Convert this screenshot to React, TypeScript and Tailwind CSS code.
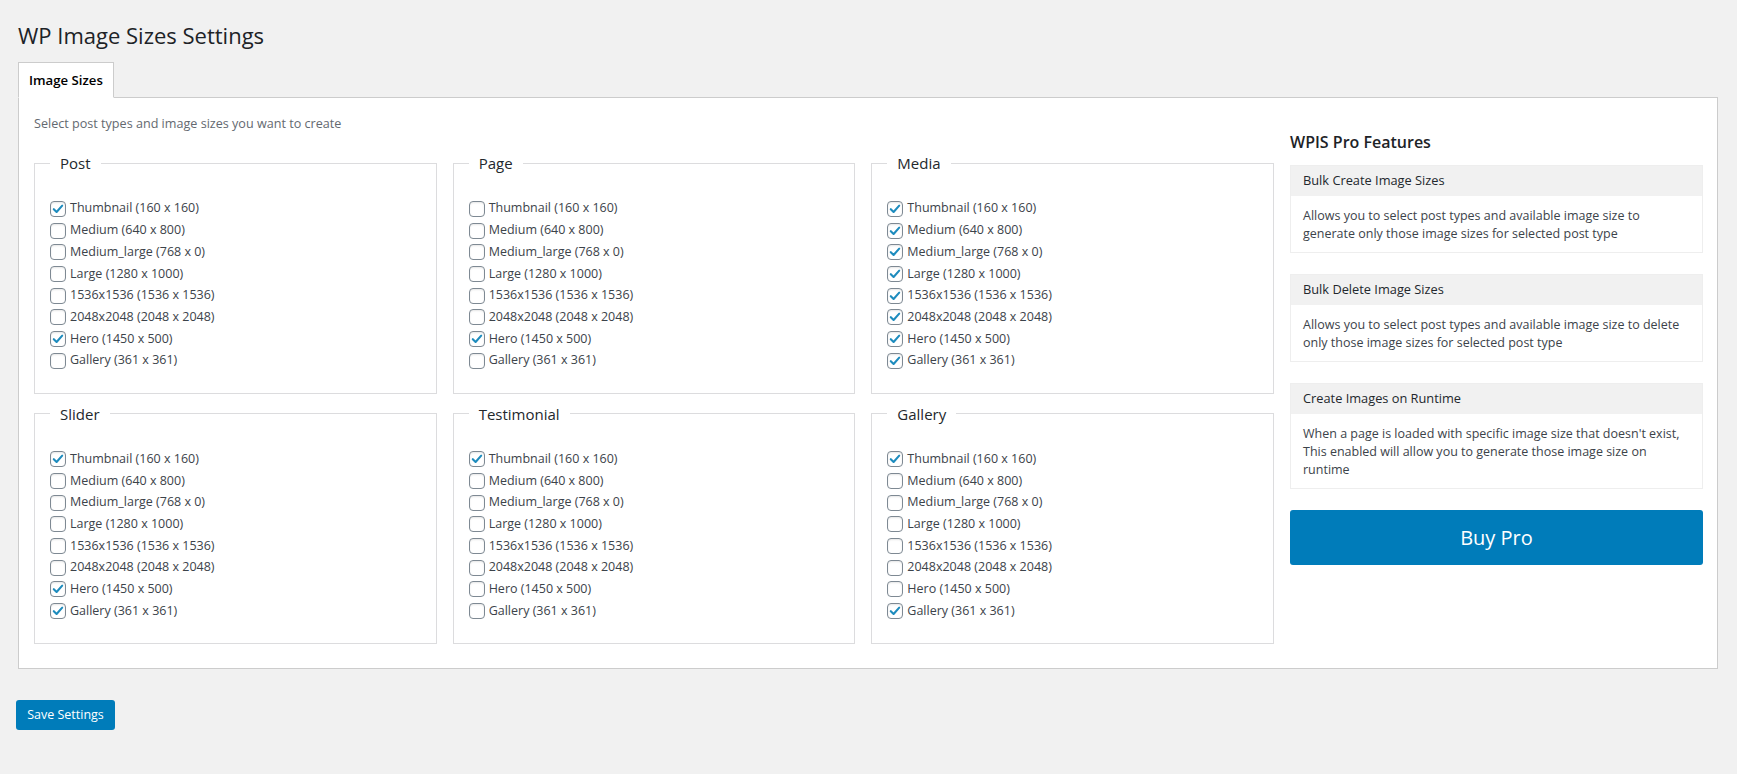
import React from 'react';

const SIZES = [
  'Thumbnail (160 x 160)',
  'Medium (640 x 800)',
  'Medium_large (768 x 0)',
  'Large (1280 x 1000)',
  '1536x1536 (1536 x 1536)',
  '2048x2048 (2048 x 2048)',
  'Hero (1450 x 500)',
  'Gallery (361 x 361)',
];

// which sizes are ticked, by index into SIZES
const POST_TYPES: { name: string; checked: number[] }[] = [
  { name: 'Post', checked: [0, 6] },
  { name: 'Page', checked: [6] },
  { name: 'Media', checked: [0, 1, 2, 3, 4, 5, 6, 7] },
  { name: 'Slider', checked: [0, 6, 7] },
  { name: 'Testimonial', checked: [0] },
  { name: 'Gallery', checked: [0, 7] },
];

const FEATURES = [
  {
    title: 'Bulk Create Image Sizes',
    text: 'Allows you to select post types and available image size to generate only those image sizes for selected post type',
  },
  {
    title: 'Bulk Delete Image Sizes',
    text: 'Allows you to select post types and available image size to delete only those image sizes for selected post type',
  },
  {
    title: 'Create Images on Runtime',
    text: "When a page is loaded with specific image size that doesn't exist, This enabled will allow you to generate those image size on runtime",
  },
];

function Checkbox({ checked }: { checked: boolean }) {
  return (
    <span className="w-4 h-4 shrink-0 rounded-[4px] border border-[#7e8993] bg-white shadow-[inset_0_1px_2px_rgba(0,0,0,0.1)] flex items-center justify-center">
      {checked && (
        <svg viewBox="0 0 16 16" className="w-[14px] h-[14px]">
          <path d="M3.2 8.2 L6.4 11.4 L12.8 4.2" fill="none" stroke="#1e8cbe" strokeWidth="2.4" strokeLinecap="round" strokeLinejoin="round" />
        </svg>
      )}
    </span>
  );
}

function SizeGroup({ name, checked }: { name: string; checked: number[] }) {
  return (
    <fieldset className="border border-[#dcdcde] pl-[15px] pr-4 pt-[25px] pb-[21px] min-w-0">
      <legend className="px-[10px] text-[15px] leading-[20px] font-normal text-[#23282d]">{name}</legend>
      {SIZES.map((s, i) => (
        <label key={s} className="flex items-center gap-[4px] h-[21.7px] text-[12.5px] text-[#3c434a] cursor-pointer">
          <Checkbox checked={checked.includes(i)} />
          <span>{s}</span>
        </label>
      ))}
    </fieldset>
  );
}

export default function App() {
  return (
    <div className="min-h-screen bg-[#f1f1f1] pl-4 pr-[19px] pt-[20px] pb-10 font-['Open_Sans',sans-serif] text-[#3c434a]">
      <h1 className="ml-[2px] text-[22px] leading-[30px] font-normal text-[#1d2327]">WP Image Sizes Settings</h1>

      {/* Tabs */}
      <div className="ml-[2px] mt-[12px] flex">
        <div className="px-[10px] py-[5px] text-[13.2px] leading-[24px] font-semibold text-[#000] bg-white border border-[#ccc] border-b-white -mb-px relative z-10">
          Image Sizes
        </div>
      </div>

      {/* Panel */}
      <div className="ml-[2px] bg-white border border-[#ccc] pl-[15px] pr-[14px] pt-[17px] pb-[24px] flex gap-4">
        <div className="flex-1 min-w-0">
          <p className="text-[12.6px] leading-[18px] text-[#646970] mb-[20px]">Select post types and image sizes you want to create</p>
          <div className="grid grid-cols-3 gap-x-4 gap-y-[10px]">
            {POST_TYPES.map((p) => (
              <SizeGroup key={p.name} name={p.name} checked={p.checked} />
            ))}
          </div>
        </div>

        <aside className="w-[413px] shrink-0 pt-[16px]">
          <h3 className="text-[16px] leading-[22px] font-semibold text-[#1d2327] mb-[12px]">WPIS Pro Features</h3>
          <div className="flex flex-col gap-[21px]">
            {FEATURES.map((f) => (
              <div key={f.title} className="border border-[#eeeeee]">
                <div className="bg-[#f1f1f1] px-3 h-[30px] flex items-center text-[12.8px] text-[#23282d]">{f.title}</div>
                <p className="px-3 pt-[11px] pb-[9px] text-[12.5px] leading-[18px] text-[#3c434a]">{f.text}</p>
              </div>
            ))}
            <button className="h-[55px] rounded-[3px] bg-[#007cba] text-white text-[20px]">Buy Pro</button>
          </div>
        </aside>
      </div>

      <button className="mt-[31px] h-[30px] w-[99px] rounded-[3px] bg-[#007cba] text-white text-[12.5px]">Save Settings</button>
    </div>
  );
}
